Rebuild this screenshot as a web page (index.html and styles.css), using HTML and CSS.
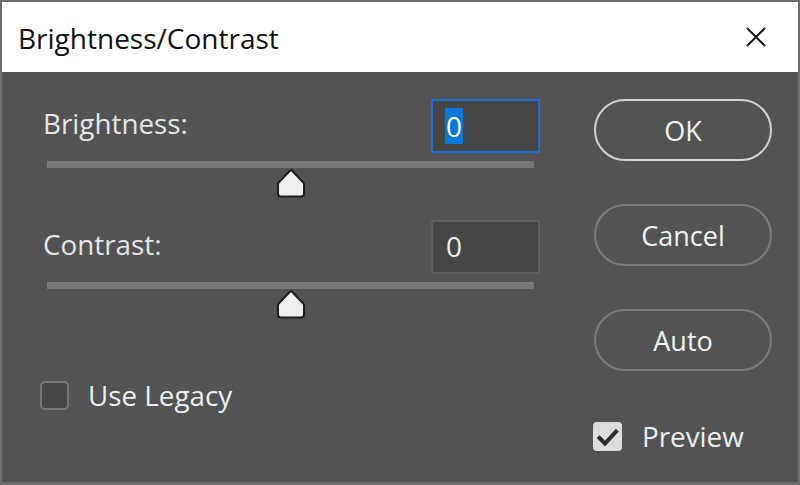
FILE: index.html
```html
<!DOCTYPE html>
<html>
<head>
<meta charset="utf-8">
<link rel="stylesheet" href="styles.css">
</head>
<body>
<div class="window">
  <div class="titlebar">
    <span class="title">Brightness/Contrast</span>
    <svg class="close" width="20" height="20" viewBox="0 0 20 20"><path d="M1 1 L19 19 M19 1 L1 19" stroke="#1a1a1a" stroke-width="2" fill="none"/></svg>
  </div>
  <div class="content">
    <div class="left">
      <div class="group">
        <div class="row">
          <span class="label">Brightness:</span>
          <div class="field active"><span class="sel">0</span></div>
        </div>
        <div class="track"></div>
        <div class="thumbrow">
          <svg class="thumb" width="30" height="29" viewBox="0 0 30 29"><path d="M13.6 2 Q15 0.6 16.4 2 L27.3 13.6 Q28 14.4 28 15.6 V24.5 Q28 27.5 25 27.5 H5 Q2 27.5 2 24.5 V15.6 Q2 14.4 2.7 13.6 Z" fill="#efefef" stroke="#1c1c1c" stroke-width="2" stroke-linejoin="round"/></svg>
        </div>
      </div>
      <div class="group second">
        <div class="row">
          <span class="label">Contrast:</span>
          <div class="field"><span class="val">0</span></div>
        </div>
        <div class="track"></div>
        <div class="thumbrow">
          <svg class="thumb" width="30" height="29" viewBox="0 0 30 29"><path d="M13.6 2 Q15 0.6 16.4 2 L27.3 13.6 Q28 14.4 28 15.6 V24.5 Q28 27.5 25 27.5 H5 Q2 27.5 2 24.5 V15.6 Q2 14.4 2.7 13.6 Z" fill="#efefef" stroke="#1c1c1c" stroke-width="2" stroke-linejoin="round"/></svg>
        </div>
      </div>
      <label class="check legacy">
        <span class="box"></span>
        <span class="ctext">Use Legacy</span>
      </label>
    </div>
    <div class="right">
      <div class="btn default">OK</div>
      <div class="btn">Cancel</div>
      <div class="btn">Auto</div>
      <label class="check preview">
        <span class="box on"><svg width="29" height="29" viewBox="0 0 29 29"><path d="M6.5 16 L12 21.5 L23 9.5" stroke="#2e2e2e" stroke-width="4" fill="none" stroke-linecap="square"/></svg></span>
        <span class="ctext">Preview</span>
      </label>
    </div>
  </div>
</div>
</body>
</html>
```

FILE: styles.css
```css
html, body {
  margin: 0;
  padding: 0;
}
body {
  font-family: "Open Sans", "Noto Sans", sans-serif;
  background: #535353;
}
.window {
  width: 800px;
  height: 485px;
  box-sizing: border-box;
  border: 2px solid #6d6d6d;
  border-bottom-width: 3px;
  background: #535353;
  display: flex;
  flex-direction: column;
  overflow: hidden;
}
.titlebar {
  height: 70px;
  flex: none;
  background: #ffffff;
  display: flex;
  align-items: center;
  justify-content: space-between;
  padding: 0 32px 0 16px;
}
.title {
  font-size: 28px;
  color: #111;
  line-height: 1;
  padding-top: 1px;
}
.close {
  display: block;
  margin-top: -1px;
}
.content {
  flex: 1;
  display: flex;
  padding: 27px 0 0 38px;
}
.left {
  width: 500px;
  display: flex;
  flex-direction: column;
}
.right {
  width: 178px;
  margin-left: 54px;
  display: flex;
  flex-direction: column;
  gap: 43px;
}
.row {
  display: flex;
  align-items: center;
  justify-content: space-between;
  height: 54px;
}
.label {
  font-size: 27.8px;
  color: #e4e6e8;
  padding-left: 3px;
  margin-top: -6px;
}
.field {
  width: 109px;
  height: 54px;
  box-sizing: border-box;
  border: 2px solid #5f5f5f;
  background: #464646;
  display: flex;
  align-items: center;
  padding-left: 12px;
  font-size: 28px;
  color: #eef2f6;
}
.field.active {
  border-color: #1a6fd6;
}
.sel {
  display: inline-block;
  background: #0a78d7;
  color: #ffffff;
  height: 36px;
  line-height: 36px;
  padding: 0 1px;
}
.val {
  padding-left: 1px;
  line-height: 36px;
  margin-top: -2px;
}
.track {
  height: 7px;
  background: #777777;
  margin: 8px 6px 0 7px;
}
.thumbrow {
  display: flex;
  justify-content: center;
  margin: 1px 6px 0 7px;
  height: 29px;
}
.thumb {
  display: block;
}
.group.second {
  margin-top: 22px;
}
.check {
  display: flex;
  align-items: center;
  gap: 19px;
}
.legacy {
  margin-top: 57px;
}
.box {
  width: 29px;
  height: 29px;
  box-sizing: border-box;
  border: 2px solid #787878;
  border-radius: 5px;
  background: #464646;
  flex: none;
}
.box.on {
  border: none;
  background: #dddddd;
  border-radius: 4px;
}
.box svg {
  display: block;
}
.ctext {
  font-size: 27.8px;
  color: #eceef0;
  margin-top: 0;
}
.btn {
  height: 62px;
  box-sizing: border-box;
  border: 2px solid #7a7a7a;
  border-radius: 31px;
  display: flex;
  align-items: center;
  justify-content: center;
  font-size: 27px;
  color: #f0f2f4;
  padding-top: 1px;
}
.btn.default {
  border-color: #d2d2d2;
}
.preview {
  margin-top: 3px;
  margin-left: -1px;
  gap: 20px;
}
```
